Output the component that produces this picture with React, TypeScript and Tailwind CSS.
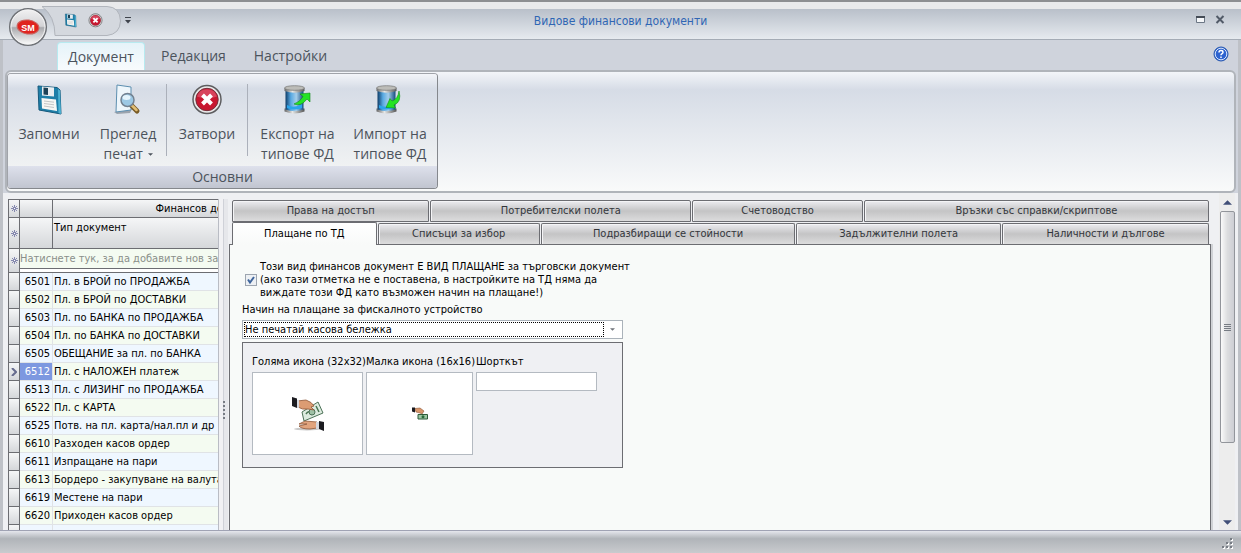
import React from "react";
import clsx from "clsx";

const rows = [
    { id: 6501, name: "Пл. в БРОЙ по ПРОДАЖБА" },
    { id: 6502, name: "Пл. в БРОЙ по ДОСТАВКИ" },
    { id: 6503, name: "Пл. по БАНКА по ПРОДАЖБА" },
    { id: 6504, name: "Пл. по БАНКА по ДОСТАВКИ" },
    { id: 6505, name: "ОБЕЩАНИЕ за пл. по БАНКА" },
    { id: 6512, name: "Пл. с НАЛОЖЕН платеж" },
    { id: 6513, name: "Пл. с ЛИЗИНГ по ПРОДАЖБА" },
    { id: 6522, name: "Пл. с КАРТА" },
    { id: 6525, name: "Потв. на пл. карта/нал.пл и др" },
    { id: 6610, name: "Разходен касов ордер" },
    { id: 6611, name: "Изпращане на пари" },
    { id: 6613, name: "Бордеро - закупуване на валута" },
    { id: 6619, name: "Местене на пари" },
    { id: 6620, name: "Приходен касов ордер" },
];

const FloppyIcon = ({ className }: { className?: string }) => (
    <svg viewBox="0 0 32 32" className={className} aria-hidden="true">
        <path d="M5 2 L24 3.500 L27 6 L28 30 L6 26 Z" fill="#1f7fa8" stroke="#14597c" strokeWidth="1" />
        <path d="M9 2.500 L21 3.600 L21 12.500 L9 11.500 Z" fill="#e9eef1" />
        <path d="M10.500 3.500 L15 4 L15 11 L10.500 10.500 Z" fill="#1d4257" />
        <path d="M8.500 14 L23 15.500 L24 27 L9 24.500 Z" fill="#f7f7f4" />
        <path d="M11 17 L21 18.200 M11 19.500 L21 20.800 M11 22 L21 23.500" stroke="#c3c6c6" strokeWidth="1" />
        <path d="M25 5 L27 6.500 L28 30 L25.500 29 Z" fill="#4fb3d3" />
    </svg>
);

const PreviewIcon = ({ className }: { className?: string }) => (
    <svg viewBox="0 0 32 32" className={className} aria-hidden="true">
        <path d="M2 28 L20 25 L18 29 L5 30 Z" fill="#6f7984" opacity=".6" />
        <path d="M5 1 L19 3 L19 26 L4 28 Z" fill="#eef6fb" stroke="#5d8fb0" strokeWidth="1" />
        <path d="M19 21 L25 27" stroke="#7a5c26" strokeWidth="5" strokeLinecap="round" />
        <path d="M19 20.500 L24.500 26" stroke="#e1bf76" strokeWidth="2.500" strokeLinecap="round" />
        <circle cx="15.500" cy="16" r="6.500" fill="#9cc8e4" stroke="#738291" strokeWidth="1.500" />
        <ellipse cx="14.500" cy="13.500" rx="4" ry="2.500" fill="#e4f4fc" />
    </svg>
);

const CloseIcon = ({ className }: { className?: string }) => (
    <svg viewBox="0 0 32 32" className={className} aria-hidden="true">
        <circle cx="16" cy="15.500" r="14" fill="#e9e9e9" stroke="#5d5d5f" strokeWidth="1.500" />
        <circle cx="16" cy="15.500" r="11.200" fill="#c81730" stroke="#74303a" strokeWidth="1" />
        <path d="M6 12.500 A10.500 10.500 0 0 1 26 12.500 Q16 16.500 6 12.500" fill="#e2607a" opacity=".6" />
        <path d="M11.500 11 L20.500 20 M20.500 11 L11.500 20" stroke="#fff" strokeWidth="4" />
    </svg>
);

const DatabaseIcon = ({ incoming }: { incoming?: boolean }) => (
    <svg viewBox="0 0 32 32" className="h-8 w-8" aria-hidden="true">
        <defs>
            <linearGradient id="dbBody" x1="0" x2="1">
                <stop offset="0" stopColor="#0d3c68" />
                <stop offset=".3" stopColor="#58a9e2" />
                <stop offset=".6" stopColor="#a4cdea" />
                <stop offset="1" stopColor="#154d80" />
            </linearGradient>
            <linearGradient id="dbCap" x1="0" x2="1">
                <stop offset="0" stopColor="#666" />
                <stop offset=".4" stopColor="#e7e7e5" />
                <stop offset="1" stopColor="#555" />
            </linearGradient>
        </defs>
        <path d="M2.500 24.500 v3 q10 4 20 0 v-3 z" fill="url(#dbCap)" />
        <path d="M3.500 6 V25.500 q9 3.500 18 0 V6 z" fill="url(#dbBody)" />
        <path d="M5 21 q7 4 15 -1 v4 q-8 3 -15 0 z" fill="#2aa5ec" />
        <path d="M2.500 4 v3 q10 3.500 20 0 v-3 z" fill="url(#dbCap)" />
        <ellipse cx="12.500" cy="4" rx="10" ry="2.300" fill="#bcbcb8" stroke="#747472" strokeWidth=".7" />
        {incoming ? (
            <path d="M25 7 Q28 18 20 21 L21.500 24 L12 23.500 L16 14.500 L18 17 Q24 15 25 7 Z" fill="#24e324" stroke="#128a18" strokeWidth=".6" />
        ) : (
            <path d="M12 20 Q19 23 25 15 L28 18 V9 L18 10 L21 12.500 Q18 18 12 20 Z" fill="#24e324" stroke="#128a18" strokeWidth=".6" />
        )}
    </svg>
);

const HandMoneyIcon = () => (
    <svg viewBox="0 0 32 34" className="h-[34px] w-8" aria-hidden="true">
        <ellipse cx="15" cy="32" rx="13" ry="1.500" fill="#c9c9c9" />
        <path d="M10 15 L26 5 L31 16 L12 24 Z" fill="#dcebdf" stroke="#4d7258" />
        <path d="M14 17 q3 -5 6 1 M24 9 l3 6" stroke="#477351" fill="none" strokeWidth="1.500" />
        <circle cx="20" cy="15" r="3" fill="#9fc1a6" stroke="#4d7258" />
        <path d="M5 4 L14 3 Q20 5 22 9 L19 10 L22 13 L16 12 Q10 13 6 10 Z" fill="#dc9c73" stroke="#8e5737" strokeWidth=".8" />
        <path d="M0 0 L5 1.500 V11 L0 9 Z" fill="#1b1b20" />
        <path d="M5 3 L7 3 V11 L5 11 Z" fill="#d5d7de" />
        <path d="M25 25 L13 24 L7 27 L15 27 L7 29 Q9 32 18 32 L25 31 Z" fill="#e1a47e" stroke="#8e5737" strokeWidth=".8" />
        <path d="M24 25 h3 v7 h-3 z" fill="#d5d7de" />
        <path d="M27 24 L32 25 V34 L27 32 Z" fill="#1b1b20" />
    </svg>
);

const SmallHandIcon = () => (
    <svg viewBox="0 0 16 16" className="h-4 w-4" aria-hidden="true">
        <path d="M6 8.500 h9.500 v4.500 h-9.500 z" fill="#9cc7a4" stroke="#2c5b38" />
        <circle cx="11" cy="10.800" r="1.500" fill="#2c6a3a" />
        <path d="M3 2.500 L8 2 L12 5 L10 8 L8 7 L4 6 Z" fill="#d8976c" stroke="#8e5737" strokeWidth=".6" />
        <path d="M0 1.500 h3 v5 l-3 -1 z" fill="#1b1b20" />
    </svg>
);

const AsteriskIcon = () => (
    <svg viewBox="0 0 7 7" className="mx-auto block h-[7px] w-[7px]" aria-hidden="true">
        <path d="M3.500 0 V7 M0 3.500 H7 M1 1 L6 6 M6 1 L1 6" stroke="#7b7ea8" strokeWidth=".9" />
        <path d="M3 3h1v1h-1z" fill="#fff" />
    </svg>
);

const Arrow = ({ up, className }: { up?: boolean; className?: string }) => (
    <svg viewBox="0 0 10 5" className={className} aria-hidden="true">
        <path d={up ? "M5 0 L10 5 H0 Z" : "M0 0 H10 L5 5 Z"} fill="currentColor" />
    </svg>
);

const RibbonButton = ({ icon, className, children }: { icon: React.ReactNode; className: string; children: React.ReactNode }) => (
    <button type="button" className={clsx("flex shrink-0 flex-col items-center pt-2.5 text-[14px] leading-5 text-[#4c535c]", className)}>
        {icon}
        <span className="mt-2 whitespace-nowrap">{children}</span>
    </button>
);

const Separator = () => <div className="mt-2.5 h-[72px] w-px shrink-0 bg-[#abb0ba]" />;

const PageTab = ({ className, active, children }: { className: string; active?: boolean; children: React.ReactNode }) => (
    <button
        type="button"
        role="tab"
        aria-selected={!!active}
        className={clsx(
            "min-w-0 rounded-t-xs border border-[#6c6d72] whitespace-nowrap",
            active
                ? "border-b-0 bg-linear-to-b from-white to-[#f8faf9] text-black"
                : "bg-linear-to-b from-[#ececf0] from-0% via-[#c4c4c5] via-50% to-[#dcdcdd] text-[#33363b] shadow-[inset_1px_1px_0_#f4f4f6]",
            className
        )}
    >
        {children}
    </button>
);

const TitleBar = () => (
    <header className="relative flex h-10 shrink-0 items-center border-t-2 border-b border-t-[#8d8f92] border-b-[#a4abb5] bg-linear-to-b from-[#e9eaec] from-18% via-[#b9c0ca] via-19% to-[#e6eaef]">
        <svg viewBox="0 0 80 30" className="absolute top-1 left-[42px] h-[30px] w-20" aria-hidden="true">
            <path d="M0 .5 H65 Q78 1 78.500 15 Q78 28 65 29.500 H13 Q13 10 0 .5 Z" fill="#d4d8de" stroke="#b1b5bc" />
        </svg>
        <button type="button" aria-label="Меню" className="absolute top-[5px] left-2 z-10">
            <svg viewBox="0 0 40 40" className="h-10 w-10" aria-hidden="true">
                <defs>
                    <linearGradient id="orb" x1="0" y1="0" x2="0" y2="1">
                        <stop offset="0" stopColor="#f2f2f3" />
                        <stop offset=".48" stopColor="#d3d3d6" />
                        <stop offset=".52" stopColor="#a9aaae" />
                        <stop offset="1" stopColor="#ffffff" />
                    </linearGradient>
                </defs>
                <circle cx="20" cy="20" r="18.300" fill="url(#orb)" stroke="#6f7277" strokeWidth="1.500" />
                <circle cx="20" cy="20" r="17" fill="none" stroke="#f3f3f4" />
                <ellipse cx="20" cy="20" rx="11" ry="7" fill="#e0241f" stroke="#c9635f" transform="rotate(8 20 20)" />
                <text x="20" y="23.500" textAnchor="middle" fontSize="9" fontWeight="700" fill="#fff" fontFamily="Liberation Sans, sans-serif">SM</text>
            </svg>
        </button>
        <div className="relative flex items-center gap-2.5 pl-[63px]">
            <button type="button" aria-label="Запомни"><FloppyIcon className="h-[15px] w-[15px]" /></button>
            <button type="button" aria-label="Затвори"><CloseIcon className="h-[15px] w-[15px]" /></button>
            <button type="button" aria-label="Още" className="ml-3 text-[#3f444c]">
                <svg viewBox="0 0 6 7" className="h-[7px] w-1.5" aria-hidden="true">
                    <path d="M0 .5 H6" stroke="currentColor" />
                    <path d="M0 3 H6 L3 6.500 Z" fill="currentColor" />
                </svg>
            </button>
        </div>
        <h1 className="pointer-events-none absolute inset-x-0 text-center text-xs text-[#2f66b4]">Видове финансови документи</h1>
        <div className="ml-auto flex items-center gap-2.5 pr-4 pb-0.5">
            <button type="button" aria-label="Възстанови">
                <svg viewBox="0 0 9 8" className="h-2 w-[9px]" aria-hidden="true">
                    <path d="M.5 .5 h8 v6 h-8 z" fill="#f4f6f8" stroke="#6c7785" />
                    <path d="M0 1 h9" stroke="#454c57" strokeWidth="2" />
                </svg>
            </button>
            <button type="button" aria-label="Затвори прозореца">
                <svg viewBox="0 0 10 9" className="h-[9px] w-2.5" aria-hidden="true">
                    <path d="M1.500 1 L8.500 8 M8.500 1 L1.500 8" stroke="#525b68" strokeWidth="2" />
                </svg>
            </button>
        </div>
    </header>
);

const Ribbon = () => (
    <>
        <nav className="flex h-[30px] shrink-0 items-end pr-[9px] pl-[54px] font-['Open_Sans','Noto_Sans',sans-serif] text-[14px] leading-5 text-[#4c535c]">
            <button type="button" className="h-7 w-[88px] rounded-t-sm border border-b-0 border-[#b7eaf0] bg-linear-to-b from-[#e5f3f9] to-[#f8fbfd]">Документ</button>
            <button type="button" className="h-7 w-[97px]">Редакция</button>
            <button type="button" className="h-7 w-[97px]">Настройки</button>
            <button type="button" aria-label="Помощ" className="mb-2 ml-auto">
                <svg viewBox="0 0 16 16" className="h-4 w-4" aria-hidden="true">
                    <circle cx="8" cy="8" r="7" fill="#2d63d0" stroke="#2757ae" />
                    <circle cx="8" cy="8" r="5.800" fill="none" stroke="#d9e6fb" />
                    <path d="M6 6.500 q0 -2 2 -2 q2 0 2 1.700 q0 1 -1.200 1.700 q-.8 .5 -.8 1.400 M8 10.500 v1.500" stroke="#fff" strokeWidth="1.500" fill="none" />
                </svg>
            </button>
        </nav>
        <section className="mx-0.5 flex h-[123px] shrink-0 rounded-md border-2 border-[#b0b4ba] bg-[#f6f8f9] bg-linear-to-b from-[#f3f5f9] from-0% via-[#d6dce6] via-15% to-[#f9fafa] font-['Open_Sans','Noto_Sans',sans-serif]">
            <div className="mt-px mb-0.5 flex flex-col overflow-hidden rounded-sm border border-[#a0a3a9] border-r-[#85888d] border-b-[#85888d]">
                <div className="flex flex-1 bg-linear-to-b from-[#f3f5f9] from-0% via-[#d6dce6] via-16% to-[#f0f2f3] pr-1">
                    <RibbonButton className="w-[82px]" icon={<FloppyIcon className="h-8 w-8" />}>Запомни</RibbonButton>
                    <RibbonButton className="w-[76px]" icon={<PreviewIcon className="h-8 w-8" />}>
                        Преглед<br />печат <Arrow className="mb-0.5 ml-px inline h-[3px] w-[5px]" />
                    </RibbonButton>
                    <Separator />
                    <RibbonButton className="w-20" icon={<CloseIcon className="h-8 w-8" />}>Затвори</RibbonButton>
                    <Separator />
                    <RibbonButton className="w-[99px]" icon={<DatabaseIcon />}>Експорт на<br />типове ФД</RibbonButton>
                    <RibbonButton className="w-[86px]" icon={<DatabaseIcon incoming />}>Импорт на<br />типове ФД</RibbonButton>
                </div>
                <div className="h-[22px] bg-linear-to-b from-[#dee1ec] to-[#c1c5d0] text-center text-[14px] leading-[22px] text-[#4c535c]">Основни</div>
            </div>
        </section>
    </>
);

const headCell = "border-r border-b border-[#6c6d72] bg-linear-to-b from-[#f5f6f7] to-[#d5d7da] font-normal";

const DocumentGrid = () => (
    <div className="w-[211px] shrink-0 overflow-hidden border-r border-[#b9bcc4] bg-white">
        <table className="w-[356px] table-fixed border-separate border-spacing-0 border-t border-l border-[#6c6d72]">
            <colgroup>
                <col className="w-[11px]" />
                <col className="w-[33px]" />
                <col />
            </colgroup>
            <thead>
                <tr className="h-[18px]">
                    <th className={headCell}><AsteriskIcon /></th>
                    <th className={headCell}></th>
                    <th className={clsx(headCell, "text-center")}>Финансов документ</th>
                </tr>
                <tr className="h-[31px]">
                    <th className={headCell}><AsteriskIcon /></th>
                    <th className={headCell}></th>
                    <th className={clsx(headCell, "px-px pt-[3px] text-left align-top")}>Тип документ</th>
                </tr>
                <tr className="h-6">
                    <th className={headCell}><AsteriskIcon /></th>
                    <td colSpan={2} className="border-b border-[#6c6d72] bg-white align-top text-[#8a8f8a]">
                        <div className="h-5 border-b border-[#6c6d72] bg-[#f4fbf1] leading-5 whitespace-nowrap">Натиснете тук, за да добавите нов запис</div>
                    </td>
                </tr>
            </thead>
            <tbody>
                {rows.map((row, i) => {
                    const selected = row.id === 6512;
                    return (
                        <tr key={row.id} className={clsx("h-[18px]", i % 2 ? "bg-[#f4fbf1]" : "bg-[#eff7ff]")}>
                            <td className={headCell}>
                                {selected && (
                                    <svg viewBox="0 0 6 8" className="mx-auto block h-2 w-1.5" aria-hidden="true">
                                        <path d="M1 0 L5 4 L1 8" stroke="#666b8d" strokeWidth="2" fill="none" />
                                    </svg>
                                )}
                            </td>
                            <td className={clsx("border-r border-b border-[#e0e3e6] pt-px pr-0.5 text-right", selected && "bg-[#7d98e0] text-white")}>{row.id}</td>
                            <td className="border-b border-[#e0e3e6] px-px pt-px whitespace-nowrap">{row.name}</td>
                        </tr>
                    );
                })}
                <tr className="h-[18px] bg-[#eff7ff]">
                    <td className={headCell}></td>
                    <td className="border-r border-[#e0e3e6]"></td>
                    <td></td>
                </tr>
            </tbody>
        </table>
    </div>
);

const PaymentPanel = () => (
    <div className="flex min-h-0 flex-1 flex-col border border-b-0 border-[#6c6d72] bg-[#f8faf9] pt-[15px] pl-3 text-black shadow-[2px_0_0_#d0d2d6]">
        <label className="ml-[3px] flex w-fit items-center gap-[3px] leading-[13px]">
            <span className="relative h-3 w-3">
                <input type="checkbox" defaultChecked className="peer block h-3 w-3 appearance-none border border-[#9da5b0] bg-[#edf0f4]" />
                <svg viewBox="0 0 12 12" className="pointer-events-none absolute inset-0 hidden h-3 w-3 peer-checked:block" aria-hidden="true">
                    <path d="M3 5.500 L5 8.500 L9 3" stroke="#3f659c" strokeWidth="2" fill="none" />
                </svg>
            </span>
            <span>
                Този вид финансов документ Е ВИД ПЛАЩАНЕ за търговски документ<br />
                (ако тази отметка не е поставена, в настройките на ТД няма да<br />
                виждате този ФД като възможен начин на плащане!)
            </span>
        </label>
        <label htmlFor="fiscal" className="mt-1 w-fit leading-[14px]">Начин на плащане за фискалното устройство</label>
        <div className="mt-[3px] flex h-[19px] w-[381px] items-center border border-[#aab2ba] bg-white p-px">
            <select id="fiscal" className="h-[15px] flex-1 appearance-none border border-dotted border-black bg-white outline-none">
                <option>Не печатай касова бележка</option>
            </select>
            <Arrow className="mr-1.5 ml-1.5 h-[3px] w-[5px] text-[#70747b]" />
        </div>
        <div className="mt-[3px] flex h-[126px] w-[381px] gap-[3px] border border-[#6c6d72] bg-[#eff0f3] px-[9px] pt-3 leading-[14px]">
            <div className="w-[111px]">
                <div className="whitespace-nowrap">Голяма икона (32x32)</div>
                <div className="mt-[3px] flex h-[83px] items-center justify-center border border-[#b4bac1] bg-white"><HandMoneyIcon /></div>
            </div>
            <div className="w-[107px]">
                <div className="whitespace-nowrap">Малка икона (16x16)</div>
                <div className="mt-[3px] flex h-[83px] items-center justify-center border border-[#b4bac1] bg-white"><SmallHandIcon /></div>
            </div>
            <div className="w-[121px]">
                <label htmlFor="shortcut" className="block">Шорткът</label>
                <input id="shortcut" type="text" className="mt-[3px] block h-[19px] w-full border border-[#b4bac1] bg-white px-1 outline-none" />
            </div>
        </div>
    </div>
);

const Scrollbar = () => (
    <div className="ml-2 flex w-4 shrink-0 flex-col items-center bg-[#ededed] text-[#414f78]">
        <button type="button" aria-label="Нагоре" className="flex h-[18px] items-center"><Arrow up className="h-[5px] w-[9px]" /></button>
        <div className="flex w-[15px] flex-[232_1_0%] flex-col items-center justify-center gap-px rounded-xs border border-[#92959b] bg-linear-to-r from-[#fafafa] via-[#dcdddf] to-[#cdced4]">
            <i className="h-px w-[7px] bg-[#777c84]" />
            <i className="h-px w-[7px] bg-[#777c84]" />
            <i className="h-px w-[7px] bg-[#777c84]" />
            <i className="h-px w-[7px] bg-[#777c84]" />
        </div>
        <div className="flex-[71_1_0%]" />
        <button type="button" aria-label="Надолу" className="flex h-4 items-center"><Arrow className="h-[5px] w-[9px]" /></button>
    </div>
);

export default function App() {
    return (
        <div className="flex h-screen flex-col overflow-hidden bg-[#cfd3dc] font-['DejaVu_Sans_Condensed','DejaVu_Sans',sans-serif] text-[11px] leading-[14px] text-black">
            <TitleBar />
            <div className="flex min-h-0 flex-1 flex-col border-x-3 border-[#bec1c7]">
                <Ribbon />
                <main className="flex min-h-0 flex-1 bg-[#eff0f3] pr-[3px] pl-[5px]">
                    <div className="flex min-h-0 pt-[6px]"><DocumentGrid /></div>
                    <div className="mt-[6px] flex w-[9px] shrink-0 flex-col items-center justify-center border-x-4 border-x-[#f1f1f4] border-r-[#e6e7eb] bg-[#cfd1d8]">
                        <div className="mb-[-90px] flex flex-col gap-0.5">
                            <i className="h-0.5 w-0.5 bg-[#777c84]" />
                            <i className="h-0.5 w-0.5 bg-[#777c84]" />
                            <i className="h-0.5 w-0.5 bg-[#777c84]" />
                            <i className="h-0.5 w-0.5 bg-[#777c84]" />
                            <i className="h-0.5 w-0.5 bg-[#777c84]" />
                        </div>
                    </div>
                    <div className="flex min-w-0 flex-1 flex-col pt-[7px] pl-px">
                        <div role="tablist" className="flex flex-col pr-0.5 pl-[3px]">
                            <div className="flex h-[22px] gap-px">
                                <PageTab className="flex-[197_1_0%]">Права на достъп</PageTab>
                                <PageTab className="flex-[261_1_0%]">Потребителски полета</PageTab>
                                <PageTab className="flex-[170_1_0%]">Счетоводство</PageTab>
                                <PageTab className="flex-[346_1_0%]">Връзки със справки/скриптове</PageTab>
                            </div>
                            <div className="flex h-[22px] items-end gap-px">
                                <PageTab active className="z-10 -mb-px h-[23px] flex-[144_1_0%]">Плащане по ТД</PageTab>
                                <PageTab className="h-[21px] flex-[162_1_0%] border-b-0">Списъци за избор</PageTab>
                                <PageTab className="h-[21px] flex-[255_1_0%] border-b-0">Подразбиращи се стойности</PageTab>
                                <PageTab className="h-[21px] flex-[205_1_0%] border-b-0">Задължителни полета</PageTab>
                                <PageTab className="h-[21px] flex-[207_1_0%] border-b-0">Наличности и дългове</PageTab>
                            </div>
                        </div>
                        <PaymentPanel />
                    </div>
                    <Scrollbar />
                </main>
            </div>
            <footer className="flex h-[23px] shrink-0 items-end justify-end border-t border-[#a0a3b4] bg-linear-to-b from-[#e5e7ed] from-0% via-[#b0b4b9] via-35% to-[#c9cbce] pr-2 pb-1">
                <svg viewBox="0 0 11 11" className="h-[11px] w-[11px]" aria-hidden="true">
                    <path d="M8 0h2v2h-2z M4 4h2v2h-2z M8 4h2v2h-2z M0 8h2v2h-2z M4 8h2v2h-2z M8 8h2v2h-2z" fill="#fff" transform="translate(1 1)" />
                    <path d="M8 0h2v2h-2z M4 4h2v2h-2z M8 4h2v2h-2z M0 8h2v2h-2z M4 8h2v2h-2z M8 8h2v2h-2z" fill="#777c84" />
                </svg>
            </footer>
        </div>
    );
}
